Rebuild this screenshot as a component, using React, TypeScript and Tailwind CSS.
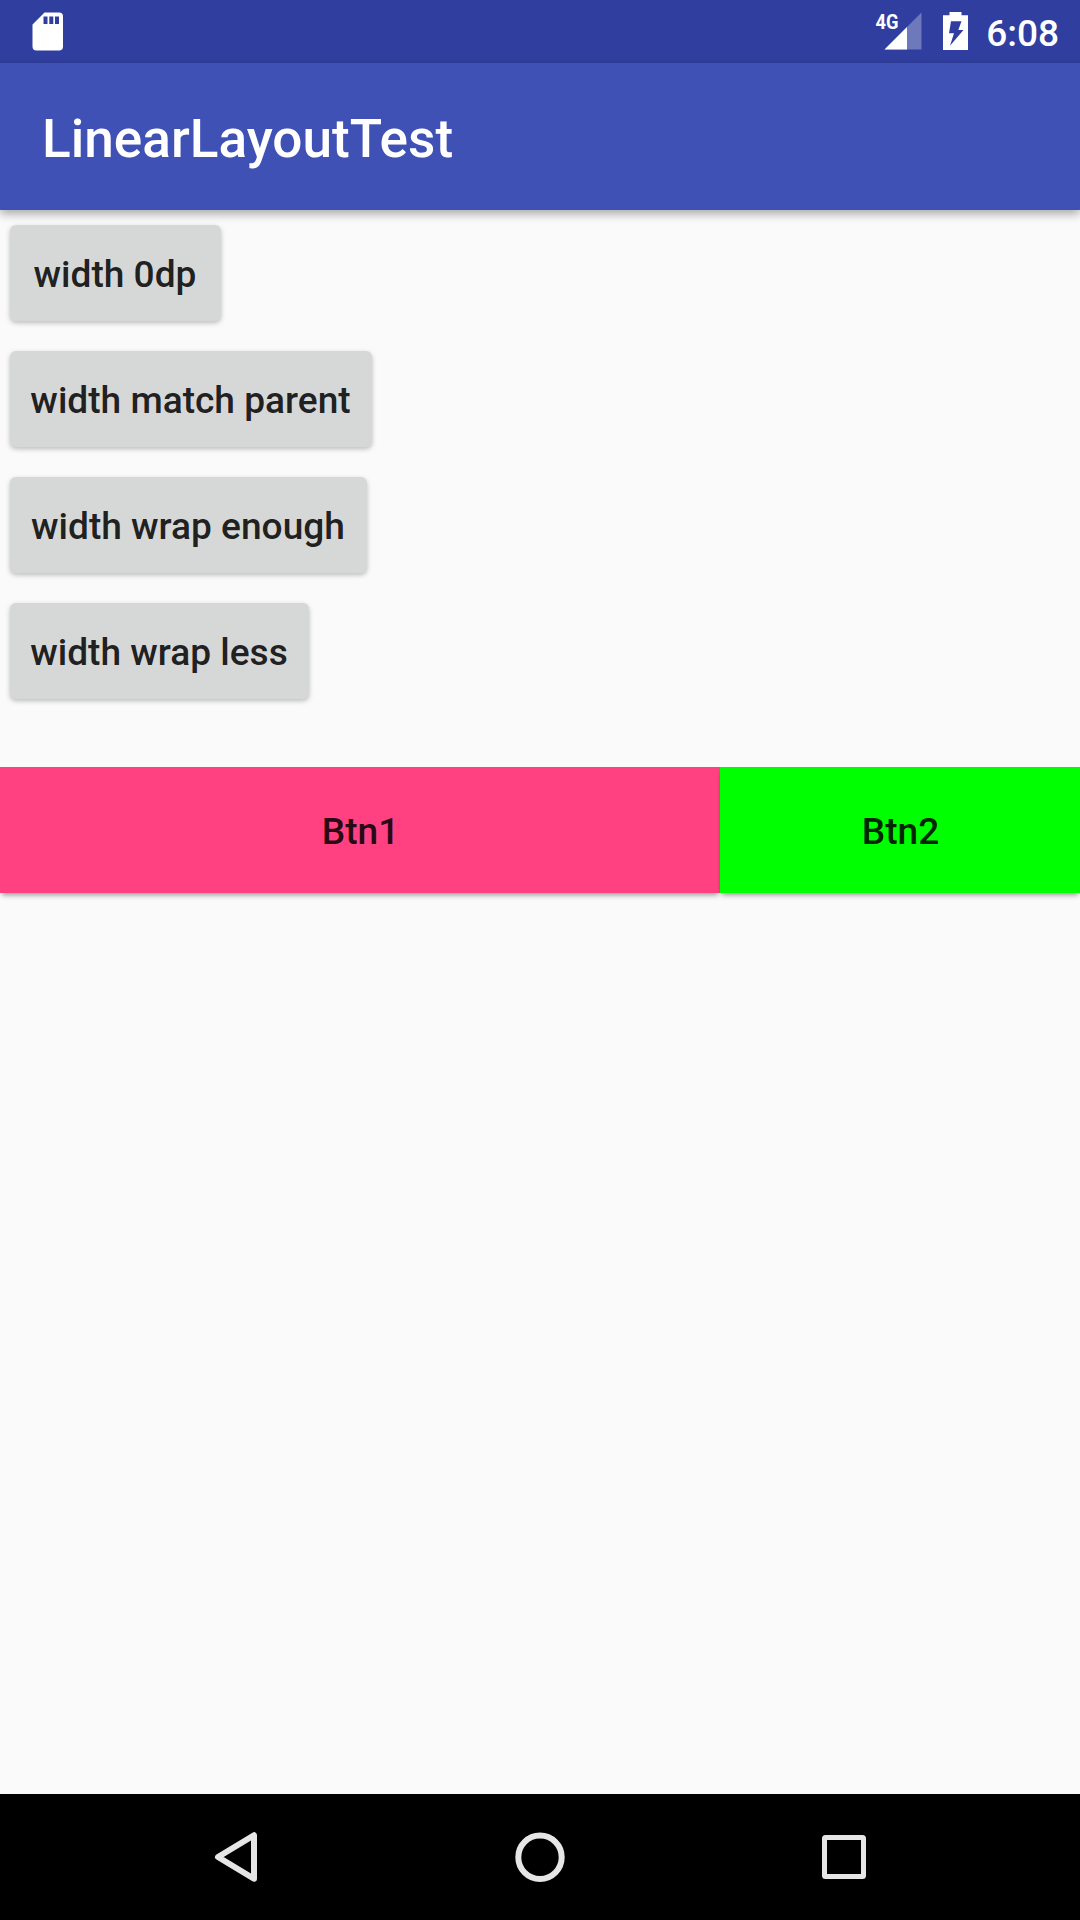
const buttons = [
  { label: 'width 0dp', cls: 'w-[211px]' },
  { label: 'width match parent', cls: 'w-[362px]' },
  { label: 'width wrap enough', cls: 'w-[357px]' },
  { label: 'width wrap less', cls: 'w-[299px]' },
];

export default function App() {
  return (
    <div className="flex h-[1920px] w-[1080px] flex-col overflow-hidden bg-[#fafafa] font-['Roboto',sans-serif] font-medium">
      <header className="flex h-[63px] shrink-0 items-start bg-[#303f9f] pt-3 pr-[21px] pl-8 text-white">
        <svg width="32" height="40" viewBox="0 0 32 40">
          <path fill="#fff" fillRule="evenodd" d="M12.5 .5H27Q31 .5 31 4.5V34.5Q31 38.5 27 38.5H4.5Q.5 38.5 .5 34.5V12.5ZM11.5 4.5V12H15.5V4.5ZM17.3 4.5V12H21.3V4.5ZM23 4.5V12H27V4.5Z" />
        </svg>
        <div className="flex-1" />
        <svg width="48" height="40" viewBox="0 0 48 40" className="overflow-visible">
          <path fill="#fff" fillOpacity=".3" d="M47.5 .5V37.5H10.5Z" />
          <path fill="#fff" d="M33 15V37.5H10.5Z" />
          <text transform="translate(1.5 17) scale(.87 1)" fill="#fff" fontSize="21" fontWeight="700">4G</text>
        </svg>
        <svg width="25" height="38" viewBox="0 0 25 38" className="mr-[18px] ml-[21px]">
          <path fill="#fff" fillRule="evenodd" d="M6.5 0H18.5V3.3H25V38H0V3.3H6.5ZM8 9.3L6 21.3H11L7 33.7L20.5 18H15.3L18.5 9.3Z" />
        </svg>
        <span className="mt-[3px] text-[37px] leading-[38px]">6:08</span>
      </header>
      <div className="z-10 flex h-[147px] shrink-0 items-center bg-[#3f51b5] pt-[6px] pl-[42px] text-[53.15px] text-white shadow-[0_4px_9px_rgba(0,0,0,0.32)]">
        <h1>LinearLayoutTest</h1>
      </div>
      <main className="flex flex-1 flex-col text-[37.1px] text-black/87">
        <div className="flex flex-col items-start gap-[29.5px] pt-[14.5px] pl-[9.5px]">
          {buttons.map((b) => (
            <button key={b.label} className={`${b.cls} h-[96.5px] rounded-[6px] bg-[#d6d7d7] pt-[5px] whitespace-nowrap shadow-[0_2px_5px_rgba(0,0,0,0.25)]`}>
              {b.label}
            </button>
          ))}
        </div>
        <div className="mt-[68px] flex h-[126px]">
          <button className="w-[720px] bg-[#ff4081] pt-[4px] pl-px shadow-[0_4px_5px_-2px_rgba(0,0,0,0.4)]">Btn1</button>
          <button className="flex-1 bg-[#00ff00] pt-[4px] pl-px shadow-[0_4px_5px_-2px_rgba(0,0,0,0.4)]">Btn2</button>
        </div>
      </main>
      <footer className="flex h-[126px] shrink-0 items-center bg-black pl-[212px]">
        <svg width="50" height="54" viewBox="0 0 50 54" fill="none" stroke="#e6e6e6" strokeWidth="6" strokeLinejoin="round">
          <path d="M42 5.2V48.8L6 27Z" />
        </svg>
        <svg width="50" height="50" viewBox="0 0 50 50" fill="none" stroke="#e6e6e6" strokeWidth="6" className="ml-[253px]">
          <circle cx="25" cy="25.2" r="21.7" />
        </svg>
        <svg width="44" height="44" viewBox="0 0 44 44" fill="none" stroke="#e6e6e6" strokeWidth="5" className="ml-[257px]">
          <rect x="2.5" y="2.5" width="39" height="39" rx="1" strokeLinejoin="round" />
        </svg>
      </footer>
    </div>
  );
}
